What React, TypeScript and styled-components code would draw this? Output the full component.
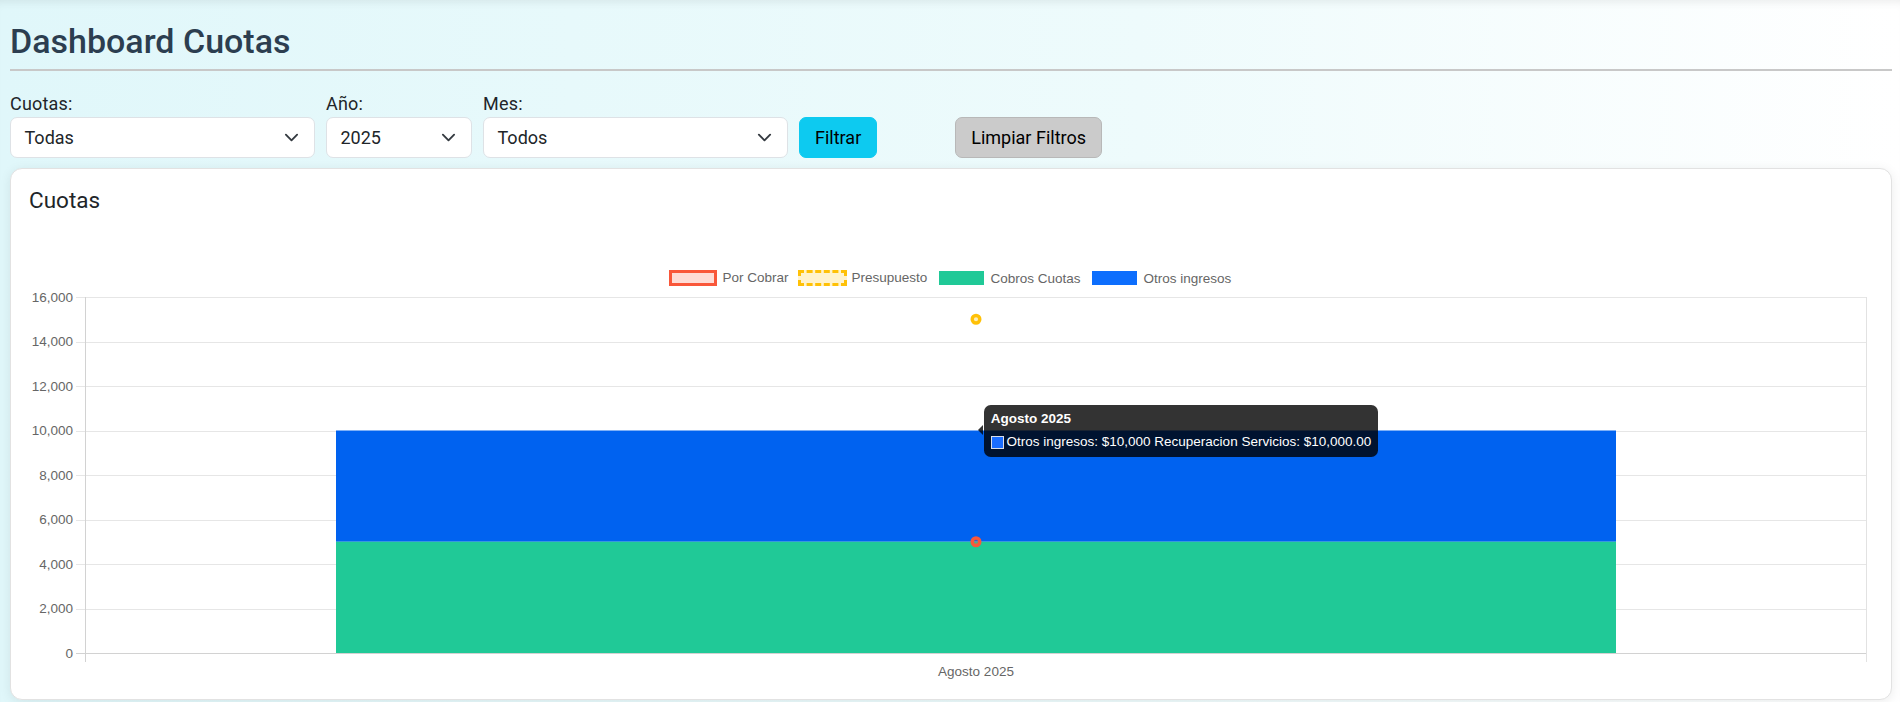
import React from 'react';
import styled, { createGlobalStyle } from 'styled-components';

const GlobalStyle = createGlobalStyle`
  * { box-sizing: border-box; }
  html, body { margin: 0; padding: 0; }
  body { font-family: Roboto, "Noto Sans", Arial, sans-serif; background: #ffffff; }
`;

const Page = styled.div`
  height: 702px;
  padding: 0 8px 0 10px;
  background: linear-gradient(90deg, #e0f7fa 0%, #eefbfc 60%, #ffffff 100%);
  box-shadow: inset 0 8px 8px -6px rgba(0, 0, 0, 0.08);
  overflow: hidden;
`;

const TitleBar = styled.header`
  padding-top: 22px;
  padding-bottom: 8px;
  border-bottom: 2px solid #c8c8c8;
`;

const Title = styled.h1`
  margin: 0;
  font-size: 34px;
  font-weight: 500;
  line-height: 39px;
  color: #2c3e50;
`;

const FilterRow = styled.div`
  display: flex;
  align-items: flex-end;
  gap: 11px;
  padding-top: 18.5px;
`;

const Field = styled.div<{ $w: number }>`
  width: ${(p) => p.$w}px;
  display: flex;
  flex-direction: column;
`;

const FieldLabel = styled.label`
  font-size: 18px;
  line-height: 27px;
  color: #212529;
  letter-spacing: 0.2px;
`;

const SelectBox = styled.div`
  height: 41px;
  display: flex;
  align-items: center;
  justify-content: space-between;
  padding: 0 15px 0 13.5px;
  background: #ffffff;
  border: 1px solid #dee2e6;
  border-radius: 7px;
  font-size: 18px;
  color: #212529;
`;

const Button = styled.button<{ $variant: 'info' | 'gray'; $offset?: number }>`
  height: 41px;
  padding: 0 15px;
  margin-left: ${(p) => p.$offset ?? 0}px;
  font-family: inherit;
  font-size: 18px;
  color: #000000;
  border-radius: 7px;
  cursor: pointer;
  background: ${(p) => (p.$variant === 'info' ? '#0dcaf0' : '#cbcbcb')};
  border: 1px solid ${(p) => (p.$variant === 'info' ? '#0dcaf0' : '#b8b8b8')};
`;

const Card = styled.section`
  margin-top: 10px;
  height: 532px;
  padding: 18px;
  background: #ffffff;
  border: 1px solid #e2e2e2;
  border-radius: 12px;
  box-shadow: 0 2px 12px rgba(0, 0, 0, 0.08);
`;

const CardTitle = styled.h5`
  margin: 0 0 9px;
  font-size: 22.5px;
  font-weight: 400;
  line-height: 27px;
  color: #212529;
`;

const ChartArea = styled.div`
  position: relative;
  height: 458px;
  padding-top: 47px;
  font-family: "Liberation Sans", Arial, Helvetica, sans-serif;
`;

const Legend = styled.div`
  height: 17px;
  display: flex;
  justify-content: center;
  align-items: center;
  gap: 11.25px;
`;

const LegendItem = styled.div`
  display: flex;
  align-items: center;
  gap: 6.75px;
  font-size: 13.5px;
  color: #666666;
  white-space: nowrap;
`;

const Swatch = styled.span<{ $fill: string; $border?: string; $dashed?: boolean }>`
  display: block;
  width: ${(p) => (p.$border ? 48.4 : 45)}px;
  height: ${(p) => (p.$border ? 16.9 : 13.5)}px;
  margin: ${(p) => (p.$border ? '0 -1.7px' : '0')};
  background: ${(p) => p.$fill};
  border: ${(p) => (p.$border ? `3.4px ${p.$dashed ? 'dashed' : 'solid'} ${p.$border}` : 'none')};
`;

const Plot = styled.svg`
  display: block;
`;

const Tooltip = styled.div`
  position: absolute;
  left: 955px;
  top: 182px;
  padding: 6.75px;
  border-radius: 6.75px;
  background: rgba(0, 0, 0, 0.8);
  color: #ffffff;
  font-size: 13.5px;
  line-height: 16.2px;
  white-space: nowrap;

  &::before {
    content: '';
    position: absolute;
    left: -5.6px;
    top: 50%;
    margin-top: -5.6px;
    border-top: 5.6px solid transparent;
    border-bottom: 5.6px solid transparent;
    border-right: 5.6px solid rgba(0, 0, 0, 0.8);
  }
`;

const TooltipTitle = styled.div`
  font-weight: 700;
  margin-bottom: 6.75px;
`;

const TooltipRow = styled.div`
  display: flex;
  align-items: center;
`;

const TooltipSwatch = styled.span`
  display: block;
  width: 13.5px;
  height: 13.5px;
  margin-right: 2.25px;
  background: #1a6dff;
  border: 1px solid #d8deea;
`;

const Chevron = () => (
  <svg width="15" height="15" viewBox="0 0 16 16" aria-hidden="true">
    <path d="m2 5 6 6 6-6" fill="none" stroke="#343a40" strokeWidth="2" strokeLinecap="round" strokeLinejoin="round" />
  </svg>
);

const filters = [
  { label: 'Cuotas:', value: 'Todas', w: 305 },
  { label: 'Año:', value: '2025', w: 146 },
  { label: 'Mes:', value: 'Todos', w: 305 },
];

const legend = [
  { label: 'Por Cobrar', fill: '#fedcd6', border: '#f9573a' },
  { label: 'Presupuesto', fill: '#fff3cd', border: '#ffc107', dashed: true },
  { label: 'Cobros Cuotas', fill: '#20c997' },
  { label: 'Otros ingresos', fill: '#0d6efd' },
];

const ticks = [16000, 14000, 12000, 10000, 8000, 6000, 4000, 2000, 0];
const PLOT_TOP = 10;
const PLOT_BOTTOM = 366;
const PLOT_LEFT = 56;
const PLOT_RIGHT = 1837;
const yOf = (v: number) => PLOT_BOTTOM - (v / 16000) * (PLOT_BOTTOM - PLOT_TOP);
const fmt = (v: number) => v.toLocaleString('en-US');
const BAR_L = 307;
const BAR_R = 1587;
const CX = 947;

const Chart = () => (
  <Plot width={1844} height={394}>
    {ticks.map((t) => (
      <line
        key={t}
        x1={PLOT_LEFT - 9}
        x2={PLOT_RIGHT}
        y1={Math.round(yOf(t)) + 0.5}
        y2={Math.round(yOf(t)) + 0.5}
        stroke={t === 0 ? '#d2d2d2' : '#e6e6e6'}
        strokeWidth={1}
      />
    ))}
    <line x1={PLOT_LEFT + 0.5} x2={PLOT_LEFT + 0.5} y1={PLOT_TOP} y2={PLOT_BOTTOM + 9} stroke="#d2d2d2" />
    <line x1={PLOT_RIGHT + 0.5} x2={PLOT_RIGHT + 0.5} y1={PLOT_TOP} y2={PLOT_BOTTOM + 9} stroke="#e2e2e2" />
    {ticks.map((t) => (
      <text key={`l${t}`} x={44} y={yOf(t) + 4.8} textAnchor="end" fontSize="13.5" fill="#666666">
        {fmt(t)}
      </text>
    ))}
    <rect x={BAR_L} y={yOf(10000)} width={BAR_R - BAR_L} height={yOf(5000) - yOf(10000)} fill="#0062f0" />
    <rect x={BAR_L} y={yOf(5000)} width={BAR_R - BAR_L} height={PLOT_BOTTOM - yOf(5000)} fill="#20c997" />
    <circle cx={CX} cy={yOf(15000)} r={3.8} fill="#fdeeb8" stroke="#ffc107" strokeWidth={3.4} />
    <circle cx={CX} cy={yOf(5000)} r={3.8} fill="rgba(249,87,58,0.25)" stroke="#f9573a" strokeWidth={3.4} />
    <text x={CX} y={389} textAnchor="middle" fontSize="13.5" fill="#666666">
      Agosto 2025
    </text>
  </Plot>
);

export default function App() {
  return (
    <>
      <GlobalStyle />
      <Page>
        <TitleBar>
          <Title>Dashboard Cuotas</Title>
        </TitleBar>
        <FilterRow>
          {filters.map((f) => (
            <Field key={f.label} $w={f.w}>
              <FieldLabel>{f.label}</FieldLabel>
              <SelectBox role="combobox">
                <span>{f.value}</span>
                <Chevron />
              </SelectBox>
            </Field>
          ))}
          <Button $variant="info">Filtrar</Button>
          <Button $variant="gray" $offset={67}>
            Limpiar Filtros
          </Button>
        </FilterRow>
        <Card>
          <CardTitle>Cuotas</CardTitle>
          <ChartArea>
            <Legend>
              {legend.map((l) => (
                <LegendItem key={l.label}>
                  <Swatch $fill={l.fill} $border={l.border} $dashed={l.dashed} />
                  {l.label}
                </LegendItem>
              ))}
            </Legend>
            <Chart />
            <Tooltip>
              <TooltipTitle>Agosto 2025</TooltipTitle>
              <TooltipRow>
                <TooltipSwatch />
                Otros ingresos: $10,000 Recuperacion Servicios: $10,000.00
              </TooltipRow>
            </Tooltip>
          </ChartArea>
        </Card>
      </Page>
    </>
  );
}
